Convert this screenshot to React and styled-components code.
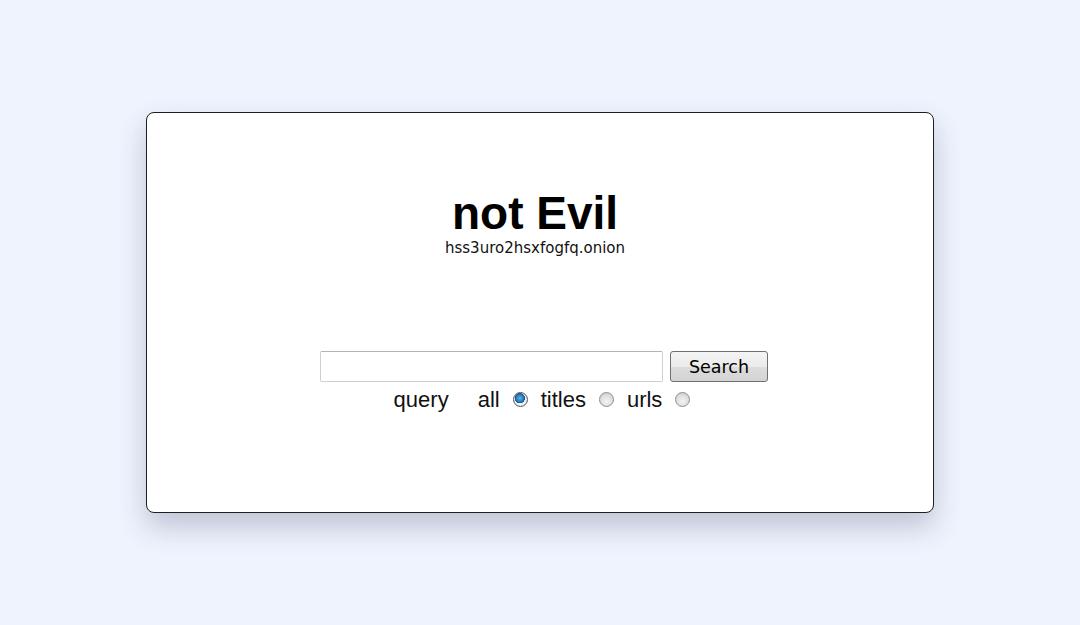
import React, { useState } from 'react';
import styled, { createGlobalStyle } from 'styled-components';

const GlobalStyle = createGlobalStyle`
  html, body {
    margin: 0;
    padding: 0;
    background-color: #eff3fe;
  }
`;

const SEARCH_OPTIONS = [
  { value: 'all', label: 'all' },
  { value: 'titles', label: 'titles' },
  { value: 'urls', label: 'urls' },
];

const App = () => {
  const [query, setQuery] = useState('');
  const [scope, setScope] = useState('all');

  return (
    <Page>
      <GlobalStyle />
      <Card>
        <Brand>
          <Title>not Evil</Title>
          <Address>hss3uro2hsxfogfq.onion</Address>
        </Brand>
        <SearchForm onSubmit={(e) => e.preventDefault()}>
          <SearchRow>
            <SearchInput
              type="text"
              value={query}
              onChange={(e) => setQuery(e.target.value)}
            />
            <SearchButton type="submit">Search</SearchButton>
          </SearchRow>
          <OptionRow>
            <QueryLabel>query</QueryLabel>
            {SEARCH_OPTIONS.map(({ value, label }) => (
              <Option key={value}>
                <span>{label}</span>
                <Radio
                  type="radio"
                  name="scope"
                  value={value}
                  checked={scope === value}
                  onChange={() => setScope(value)}
                />
              </Option>
            ))}
          </OptionRow>
        </SearchForm>
      </Card>
    </Page>
  );
};

const Page = styled.div`
  min-height: 625px;
  display: flex;
  justify-content: center;
  padding-top: 112px;
  box-sizing: border-box;
`;

const Card = styled.div`
  width: 788px;
  height: 401px;
  box-sizing: border-box;
  padding-top: 75px;
  background-color: #ffffff;
  border: 1px solid #1f1f1f;
  border-radius: 8px;
  box-shadow: 0 14px 28px rgba(40, 50, 80, 0.24);
  display: flex;
  flex-direction: column;
  align-items: center;
`;

const Brand = styled.div`
  display: flex;
  flex-direction: column;
  align-items: center;
  margin-right: 10px;
`;

const Title = styled.h1`
  margin: 0;
  font-family: 'Liberation Sans', Arial, sans-serif;
  font-weight: 700;
  font-size: 46px;
  line-height: 50px;
  color: #000000;
`;

const Address = styled.div`
  font-family: 'DejaVu Sans', Verdana, sans-serif;
  font-size: 15px;
  line-height: 18px;
  color: #111111;
  margin-top: 1px;
`;

const SearchForm = styled.form`
  margin-top: 94px;
  display: flex;
  flex-direction: column;
  align-items: center;
`;

const SearchRow = styled.div`
  display: flex;
  gap: 7px;
  padding-left: 8px;
`;

const SearchInput = styled.input`
  width: 343px;
  height: 31px;
  box-sizing: border-box;
  border: 1px solid #cfcfcf;
  border-top-color: #b3b3b3;
  border-radius: 2px;
  padding: 0 4px;
  outline: none;
  font-size: 16px;
`;

const SearchButton = styled.button`
  width: 98px;
  height: 31px;
  box-sizing: border-box;
  padding: 0;
  border: 1px solid #707070;
  border-radius: 3px;
  background: linear-gradient(#f4f4f4, #ebebeb 50%, #dddddd 51%, #d3d3d3);
  font-family: 'DejaVu Sans', Verdana, sans-serif;
  font-size: 17.5px;
  color: #000000;
  cursor: pointer;
`;

const OptionRow = styled.div`
  margin-top: 5px;
  padding-left: 4px;
  display: flex;
  align-items: center;
  font-family: 'Liberation Sans', Arial, sans-serif;
  font-size: 22px;
  line-height: 25px;
  color: #111111;
`;

const QueryLabel = styled.span`
  margin-right: 29px;
`;

const Option = styled.label`
  display: flex;
  align-items: center;
  gap: 13px;
  margin-right: 13px;

  &:last-child {
    margin-right: 0;
  }
`;

const Radio = styled.input`
  appearance: none;
  margin: 0;
  width: 15px;
  height: 15px;
  border-radius: 50%;
  border: 1px solid #8e8e8e;
  box-sizing: border-box;
  background: radial-gradient(circle at 50% 65%, #f4f4f4 0%, #dcdcdc 60%, #c4c4c4 100%);
  cursor: pointer;

  &:checked {
    border-color: #4f5a64;
    background:
      radial-gradient(circle at 45% 40%, #5fb4e6 0%, #1f75b3 38%, #154f7c 46%, transparent 50%),
      radial-gradient(circle, #ffffff 0%, #f0f0f0 60%, #c8c8c8 100%);
  }
`;

export default App;
